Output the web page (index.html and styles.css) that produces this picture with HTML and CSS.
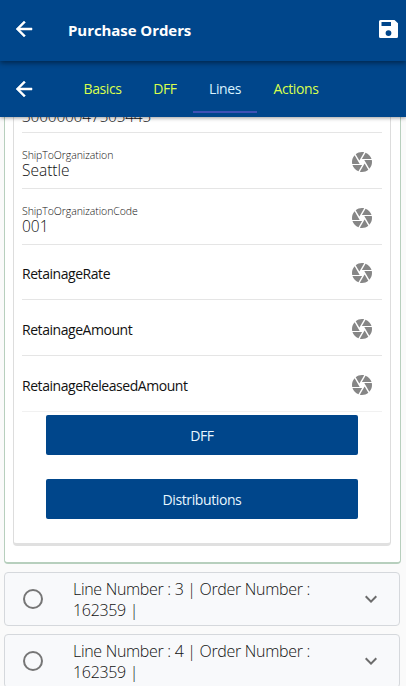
FILE: index.html
```
<!DOCTYPE html>
<html lang="en">
<head>
<meta charset="utf-8">
<title>Purchase Orders</title>
<link rel="stylesheet" href="styles.css">
</head>
<body>
<svg class="defs" width="0" height="0">
  <symbol id="back" viewBox="0 0 24 24"><path d="M20 11H7.83l5.59-5.59L12 4l-8 8 8 8 1.41-1.41L7.83 13H20v-2z"/></symbol>
  <symbol id="camera" viewBox="0 0 24 24"><path d="M9.4 10.5l4.77-8.26C13.47 2.09 12.75 2 12 2c-2.4 0-4.6.85-6.32 2.25l3.66 6.35.06-.1zM21.54 9c-.92-2.92-3.15-5.26-6-6.34L11.88 9h9.66zm.26 1h-7.49l.29.5 4.76 8.25C21 16.97 22 14.61 22 12c0-.69-.07-1.35-.2-2zM8.54 12l-3.9-6.75C3.01 7.03 2 9.39 2 12c0 .69.07 1.35.2 2h7.49l-1.15-2zm-6.08 3c.92 2.92 3.15 5.26 6 6.34L12.12 15H2.46zm11.27 0l-3.9 6.76c.7.15 1.42.24 2.17.24 2.4 0 4.6-.85 6.32-2.25l-3.66-6.35-.93 1.6z"/></symbol>
  <symbol id="chevron" viewBox="0 0 24 24"><path d="M7.41 8.59L12 13.17l4.59-4.58L18 10l-6 6-6-6z"/></symbol>
</svg>
<header class="topbar">
  <svg class="icon back"><use href="#back"/></svg>
  <h1 class="title">Purchase Orders</h1>
  <svg class="icon save" viewBox="0 0 24 24"><path fill-rule="evenodd" d="M4.500 3H18.500L22 6.200V19.500a1.500 1.500 0 0 1-1.500 1.500h-16A1.500 1.500 0 0 1 3 19.500v-15A1.500 1.500 0 0 1 4.500 3zM5.500 5v4h9.500V5zM12.500 13.200a2.900 2.900 0 1 0 0 5.800 2.900 2.900 0 0 0 0-5.800z"/></svg>
</header>
<nav class="tabs">
  <svg class="icon back"><use href="#back"/></svg>
  <a class="tab basics">Basics</a>
  <a class="tab dff">DFF</a>
  <a class="tab lines active">Lines</a>
  <a class="tab actions">Actions</a>
</nav>
<main class="content">
  <section class="panel">
    <div class="card">
      <div class="row first"><span class="value number">300000047505445</span></div>
      <div class="row"><div><div class="label">ShipToOrganization</div><div class="value">Seattle</div></div><svg class="cam"><use href="#camera"/></svg></div>
      <div class="row"><div><div class="label">ShipToOrganizationCode</div><div class="value">001</div></div><svg class="cam"><use href="#camera"/></svg></div>
      <div class="row"><span class="field">RetainageRate</span><svg class="cam"><use href="#camera"/></svg></div>
      <div class="row"><span class="field">RetainageAmount</span><svg class="cam"><use href="#camera"/></svg></div>
      <div class="row last"><span class="field">RetainageReleasedAmount</span><svg class="cam"><use href="#camera"/></svg></div>
      <button class="btn">DFF</button>
      <button class="btn">Distributions</button>
    </div>
  </section>
  <section class="line"><i class="radio"></i><p class="text">Line Number : 3 | Order Number :<br>162359 |</p><svg class="chev"><use href="#chevron"/></svg></section>
  <section class="line"><i class="radio"></i><p class="text">Line Number : 4 | Order Number :<br>162359 |</p><svg class="chev"><use href="#chevron"/></svg></section>
</main>
</body>
</html>
```
FILE: styles.css
```
* { box-sizing: border-box; }
body {
  margin: 0;
  height: 686px;
  overflow: hidden;
  display: flex;
  flex-direction: column;
  background: #fafafa;
  color: #111;
  font-family: "Open Sans", "Noto Sans", sans-serif;
  font-weight: 300;
}
.defs { position: absolute; }
.topbar, .tabs {
  display: flex;
  align-items: center;
  flex: none;
  padding-left: 12px;
  background: #00468b;
  color: #fff;
}
.topbar {
  height: 61px;
  padding-right: 6px;
  padding-bottom: 3px;
  position: relative;
  z-index: 3;
  box-shadow: 0 2px 5px rgba(0, 0, 0, .45);
}
.icon { width: 24px; height: 24px; fill: #fff; flex: none; }
.back { stroke: #fff; stroke-width: .5px; }
.title { margin: 1px 0 0 32px; flex: 1; font-size: 15px; font-weight: 700; line-height: 20px; letter-spacing: -.07px; }
.tabs {
  height: 56px;
  position: relative;
  z-index: 2;
  box-shadow: 0 1px 4px rgba(0, 0, 0, .4);
}
.tab {
  height: 52px;
  margin-bottom: 4px;
  padding-top: 5px;
  display: flex;
  align-items: center;
  justify-content: center;
  color: #d9ff4d;
  font-size: 14px;
  font-weight: 400;
  letter-spacing: -.4px;
  border-bottom: 2px solid transparent;
}
.basics { width: 69px; margin-left: 32px; }
.dff { width: 56px; }
.lines { width: 64px; }
.actions { width: 78px; }
.active { color: #d9f3ff; border-color: #3f51b5; }
.content { flex: 1; min-height: 0; overflow: hidden; }
.panel {
  width: 397px;
  height: 447px;
  margin-left: 4px;
  padding: 0 9px;
  border: 1px solid #b7cfbd;
  border-top: 0;
  border-bottom-width: 2px;
  border-radius: 0 0 4px 4px;
  background: #fff;
}
.card {
  width: 378px;
  height: 429px;
  margin-left: -1px;
  padding: 0 8px;
  border: 1px solid #ddd;
  border-top: 0;
  border-bottom: 3px solid #e0e0e0;
  border-radius: 0 0 4px 4px;
}
.row {
  height: 55.8px;
  display: flex;
  align-items: center;
  justify-content: space-between;
  border-bottom: 1px solid #e5e5e5;
  padding: 3px 8px 0 0;
}
.row.first { height: 16px; align-items: flex-end; overflow: hidden; padding: 0 0 7px; }
.row.last { border-color: #f1f1f1; }
.label { font-size: 10.5px; line-height: 13px; letter-spacing: -.07px; margin-top: 4px; }
.value { font-size: 15.5px; line-height: 17px; letter-spacing: 0; }
.value.number { letter-spacing: -.25px; }
.field { font-size: 14px; font-weight: 400; line-height: 20px; letter-spacing: -.45px; margin-top: 2px; }
.cam { width: 24px; height: 24px; fill: #868686; flex: none; }
.btn {
  display: block;
  width: 312px;
  height: 40px;
  margin: 3px 0 0 24px;
  padding: 2px 0 0;
  border: 0;
  border-radius: 2px;
  background: #00468b;
  color: #e8f7ff;
  font: 14px "Open Sans", "Noto Sans", sans-serif;
  letter-spacing: -.4px;
}
.btn + .btn { margin-top: 24px; }
.line {
  display: flex;
  align-items: center;
  width: 396px;
  height: 54px;
  margin: 8px 0 0 4px;
  padding: 0 16px;
  border: 1px solid #d5d8dc;
  border-radius: 4px;
  background: #f8f9fb;
}
.radio { width: 20px; height: 20px; margin-left: 2px; border: 2px solid #767676; border-radius: 50%; flex: none; }
.text { flex: 1; margin: 2px 0 0 30px; font-size: 16px; line-height: 21px; letter-spacing: -.31px; }
.chev { width: 24px; height: 24px; fill: #6c6c6c; flex: none; }
```
